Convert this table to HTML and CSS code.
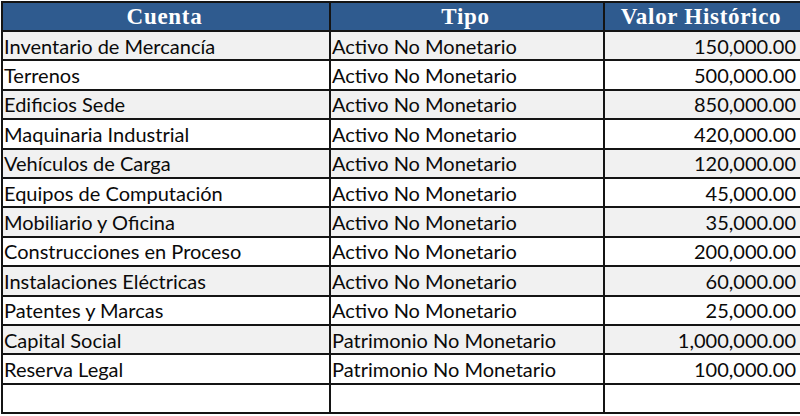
FILE: index.html
```html
<!DOCTYPE html>
<html lang="es">
<head>
<meta charset="utf-8">
<title>Cuentas</title>
<link rel="stylesheet" href="styles.css">
</head>
<body>
<table class="sheet">
  <colgroup>
    <col class="c1"><col class="c2"><col class="c3">
  </colgroup>
  <thead>
    <tr><th>Cuenta</th><th>Tipo</th><th>Valor Histórico</th></tr>
  </thead>
  <tbody>
    <tr><td>Inventario de Mercancía</td><td>Activo No Monetario</td><td class="num">150,000.00</td></tr>
    <tr><td>Terrenos</td><td>Activo No Monetario</td><td class="num">500,000.00</td></tr>
    <tr><td>Edificios Sede</td><td>Activo No Monetario</td><td class="num">850,000.00</td></tr>
    <tr><td>Maquinaria Industrial</td><td>Activo No Monetario</td><td class="num">420,000.00</td></tr>
    <tr><td>Vehículos de Carga</td><td>Activo No Monetario</td><td class="num">120,000.00</td></tr>
    <tr><td>Equipos de Computación</td><td>Activo No Monetario</td><td class="num">45,000.00</td></tr>
    <tr><td>Mobiliario y Oficina</td><td>Activo No Monetario</td><td class="num">35,000.00</td></tr>
    <tr><td>Construcciones en Proceso</td><td>Activo No Monetario</td><td class="num">200,000.00</td></tr>
    <tr><td>Instalaciones Eléctricas</td><td>Activo No Monetario</td><td class="num">60,000.00</td></tr>
    <tr><td>Patentes y Marcas</td><td>Activo No Monetario</td><td class="num">25,000.00</td></tr>
    <tr><td>Capital Social</td><td>Patrimonio No Monetario</td><td class="num">1,000,000.00</td></tr>
    <tr><td>Reserva Legal</td><td>Patrimonio No Monetario</td><td class="num">100,000.00</td></tr>
    <tr><td></td><td></td><td class="num"></td></tr>
  </tbody>
</table>
</body>
</html>
```

FILE: styles.css
```css
html, body {
  margin: 0;
  padding: 0;
  background: #ffffff;
}

.sheet {
  border-collapse: collapse;
  table-layout: fixed;
  width: 799px;
  margin: 1px 0 0 1px;
  font-family: Lato, "Liberation Sans", sans-serif;
  font-size: 20px;
  color: #0a0a0a;
}

.c1 { width: 328px; }
.c2 { width: 274px; }
.c3 { width: 197px; }

.sheet th,
.sheet td {
  border: 2px solid #141414;
  padding: 0 4px 0 1px;
  white-space: nowrap;
  overflow: hidden;
  line-height: 22px;
}

.sheet th {
  height: 27px;
  background: #2f5b8f;
  color: #ffffff;
  font-family: "Liberation Serif", "DejaVu Serif", serif;
  font-weight: bold;
  font-size: 23px;
  letter-spacing: 0.7px;
  text-align: center;
}

.sheet td {
  height: 27.4px;
}

.sheet tbody tr:nth-child(odd) td {
  background: #f1f1f1;
}

.sheet tbody tr:last-child td {
  background: #ffffff;
}

.sheet .num {
  text-align: right;
}
```
